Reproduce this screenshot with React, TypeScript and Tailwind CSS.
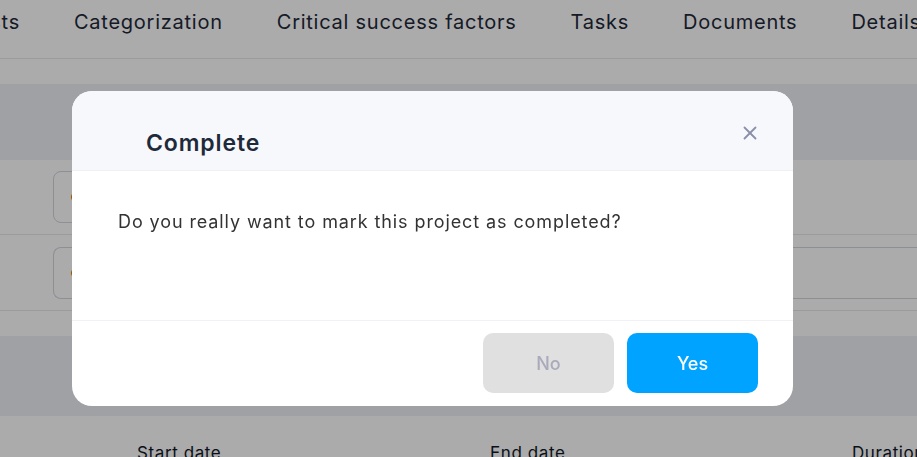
import { X } from "lucide-react";

const FONT = { fontFamily: "Inter, 'Noto Sans', sans-serif" };

const TABS = ["Categorization", "Critical success factors", "Tasks", "Documents", "Details"];

function Tabs() {
  return (
    <div className="flex h-[59px] items-start gap-[54px] overflow-hidden whitespace-nowrap border-b border-gray-200 pt-[7px] text-[20px] tracking-[0.75px] text-gray-800">
      <div className="flex w-[20px] shrink-0 justify-end overflow-hidden">
        <span>Costs</span>
      </div>
      {TABS.map((t) => (
        <span key={t} className="shrink-0">
          {t}
        </span>
      ))}
    </div>
  );
}

function Page() {
  return (
    <div className="h-[457px] w-[917px] overflow-hidden bg-white" style={FONT}>
      <Tabs />
      <div className="h-[25px]" />
      <div className="h-[76px] bg-[#edf0f5]" />
      <div className="flex h-[75px] items-center border-b border-gray-200 pl-[53px]">
        <div className="flex h-[52px] w-[600px] items-center rounded-lg border border-gray-300 px-4 text-amber-700">
          ●
        </div>
      </div>
      <div className="flex h-[76px] items-center border-b border-gray-200 pl-[53px]">
        <div className="flex h-[52px] flex-1 items-center rounded-l-lg border border-r-0 border-gray-300 px-4 text-amber-700">
          ●
        </div>
      </div>
      <div className="h-[25px]" />
      <div className="h-[80px] bg-[#edf0f5]" />
      <div className="flex whitespace-nowrap pt-[25px] text-[17px] tracking-[0.6px] text-gray-900">
        <span className="w-[137px] shrink-0 text-sky-900"></span>
        <span className="w-[353px] shrink-0">Start date</span>
        <span className="w-[362px] shrink-0">End date</span>
        <span>Duration</span>
      </div>
    </div>
  );
}

function CompleteDialog() {
  return (
    <div
      className="fixed left-[72px] top-[91px] flex h-[315px] w-[721px] flex-col overflow-hidden rounded-[20px] bg-white"
      style={FONT}
    >
      <div className="flex h-[80px] items-center justify-between border-b border-[#eef0f4] bg-[#f7f8fc] pl-[74px] pr-[32px]">
        <h2 className="pt-[25px] text-[23px] font-semibold tracking-[0.9px] text-[#1e2a3a]">Complete</h2>
        <X className="mt-[4px] h-[22px] w-[22px] text-[#8a90aa]" strokeWidth={2} />
      </div>
      <div className="h-[150px] border-b border-[#f0f1f4] pl-[46px] pt-[37px] text-[18px] tracking-[0.9px] text-[#333]">
        Do you really want to mark this project as completed?
      </div>
      <div className="flex flex-1 items-start justify-end gap-[13px] pr-[35px] pt-[12px]">
        <button className="h-[60px] w-[131px] rounded-[10px] bg-[#e0e0e0] text-[18px] font-medium text-[#a9aabb]">
          No
        </button>
        <button className="h-[60px] w-[131px] rounded-[10px] bg-[#00a3ff] text-[18px] font-medium text-white">
          Yes
        </button>
      </div>
    </div>
  );
}

export default function App() {
  return (
    <div className="relative">
      <Page />
      <div className="fixed inset-0 bg-black/[0.33]" />
      <CompleteDialog />
    </div>
  );
}
